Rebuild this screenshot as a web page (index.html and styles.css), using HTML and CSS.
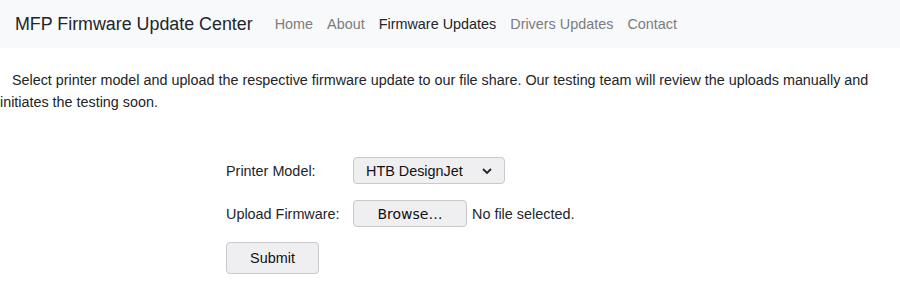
FILE: index.html
```html
<!DOCTYPE html>
<html lang="en">
<head>
    <meta charset="UTF-8">
    <meta name="viewport" content="width=device-width, initial-scale=1.0">
    <title>MFP Firmware Update Center</title>
    <link rel="stylesheet" href="styles.css">
</head>
<body>
    <nav class="navbar">
        <a class="brand" href="#">MFP Firmware Update Center</a>
        <ul class="nav-links">
            <li><a href="#">Home</a></li>
            <li><a href="#">About</a></li>
            <li><a class="active" href="#">Firmware Updates</a></li>
            <li><a href="#">Drivers Updates</a></li>
            <li><a href="#">Contact</a></li>
        </ul>
    </nav>

    <p class="intro">&nbsp;&nbsp;&nbsp;Select printer model and upload the respective firmware update to our file share. Our testing team will review the uploads manually and initiates the testing soon.</p>

    <form class="upload-form">
        <div class="row">
            <label class="field-label">Printer Model:</label>
            <button type="button" class="control select">
                <span>HTB DesignJet</span>
                <svg width="12" height="8" viewBox="0 0 12 8"><path d="M2 2 L6 6 L10 2" fill="none" stroke="#222" stroke-width="1.8"/></svg>
            </button>
        </div>
        <div class="row">
            <label class="field-label">Upload Firmware:</label>
            <button type="button" class="control browse">Browse…</button>
            <span class="file-name">No file selected.</span>
        </div>
        <div class="row">
            <button type="submit" class="control submit">Submit</button>
        </div>
    </form>
</body>
</html>
```

FILE: styles.css
```css
body {
    margin: 0;
    font-family: "Liberation Sans", Arial, sans-serif;
    font-size: 14.4px;
    color: #212529;
}
.navbar {
    background-color: #f8f9fa;
    display: flex;
    align-items: center;
    height: 48px;
    padding: 0 15px;
}
.brand {
    font-size: 17.85px;
    color: #212529;
    text-decoration: none;
    margin-right: 22px;
}
.nav-links {
    display: flex;
    list-style: none;
    margin: 0;
    padding: 0;
    gap: 14px;
}
.nav-links a {
    font-size: 14.4px;
    color: #7c7c7d;
    text-decoration: none;
}
.nav-links a.active {
    color: #212529;
}
.intro {
    font-size: 14.35px;
    line-height: 22px;
    margin: 21px 0 0;
}
.upload-form {
    margin: 44px 0 0 226px;
}
.row {
    display: flex;
    align-items: center;
    margin-bottom: 16px;
}
.row + .row {
    margin-bottom: 15px;
}
.field-label {
    width: 127px;
}
.control {
    font-family: "Liberation Sans", Arial, sans-serif;
    font-size: 14.4px;
    color: #111;
    background-color: #efeff1;
    border: 1px solid #c9c9cc;
    border-radius: 4px;
    cursor: pointer;
}
.select {
    width: 152px;
    height: 27px;
    display: flex;
    align-items: center;
    justify-content: space-between;
    padding: 0 11px 0 12px;
}
.browse {
    font-family: "DejaVu Sans", sans-serif;
    font-size: 14px;
    width: 114px;
    height: 27px;
}
.file-name {
    margin-left: 5px;
}
.submit {
    width: 93px;
    height: 32px;
}
```
